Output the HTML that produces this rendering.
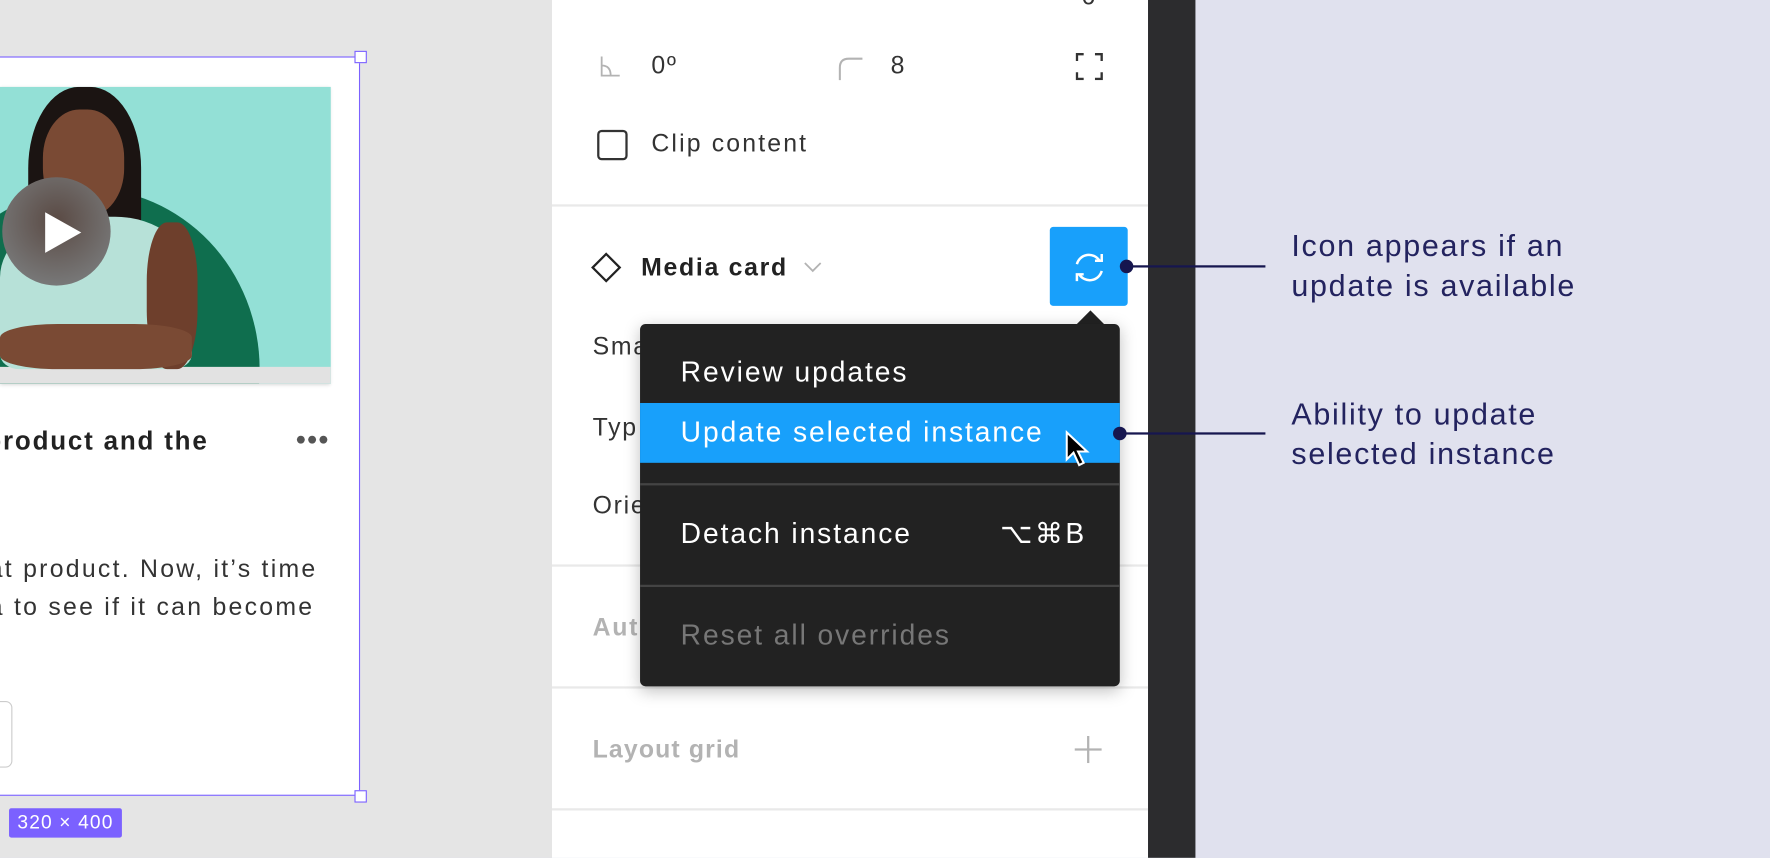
<!DOCTYPE html>
<html><head><meta charset="utf-8"><style>
html,body{margin:0;padding:0;width:1770px;height:858px;overflow:hidden;background:#e0e1ee}
#w{position:absolute;left:0;top:0;width:1568px;height:760px;transform:scale(1.12883);transform-origin:0 0;font-family:"Liberation Sans",sans-serif;overflow:hidden;letter-spacing:1.5px}
.a{position:absolute;white-space:nowrap}
.t{font-size:22px;color:#333;line-height:1}
.hr{position:absolute;left:489px;width:528px;height:2px;background:#e9e9e9}
.mi{position:absolute;left:603px;font-size:25px;color:#fff;line-height:1;letter-spacing:1.7px}
.ann{position:absolute;left:1144px;font-size:27px;color:#23235f;line-height:35px;letter-spacing:1.5px}
</style></head><body><div id="w">
<div class="a" style="left:0;top:0;width:489px;height:760px;background:#e5e5e5"></div>
<!-- card -->
<div class="a" style="left:-4px;top:50px;width:323px;height:655px;background:#fff;border:1.5px solid #7b61ff;box-sizing:border-box"></div>
<div class="a" style="left:314px;top:45px;width:9px;height:9px;background:#fff;border:1.5px solid #7b61ff"></div>
<div class="a" style="left:314px;top:700px;width:9px;height:9px;background:#fff;border:1.5px solid #7b61ff"></div>
<div class="a" style="left:0;top:77px;width:293px;height:263px;overflow:hidden;background:#93e0d6;box-shadow:0 1px 3px rgba(0,0,0,.15)">
 <div class="a" style="left:-75px;top:90px;width:305px;height:320px;border-radius:50%;background:#0f6e4e"></div>
 <div class="a" style="left:0;top:248px;width:293px;height:15px;background:#e2e2e2"></div>
 <div class="a" style="left:25px;top:0;width:100px;height:160px;border-radius:45% 45% 20% 20%;background:#1b1412"></div>
 <div class="a" style="left:38px;top:20px;width:72px;height:95px;border-radius:45%;background:#7a4a34"></div>
 <div class="a" style="left:0;top:115px;width:170px;height:135px;border-radius:40% 40% 10% 10%;background:#b7e1d8"></div>
 <div class="a" style="left:130px;top:120px;width:45px;height:130px;border-radius:40%;background:#6e3f2c"></div>
 <div class="a" style="left:0;top:210px;width:170px;height:40px;border-radius:30%;background:#7a4a34"></div>
 <div class="a" style="left:2px;top:80px;width:96px;height:96px;border-radius:50%;background:radial-gradient(circle at 50% 40%,#5a4a44,#777 75%)"></div>
 <div class="a" style="left:40px;top:111px;width:0;height:0;border-left:32px solid #fff;border-top:18px solid transparent;border-bottom:18px solid transparent"></div>
</div>
<div class="a" style="left:-13px;top:377px;font-size:23px;font-weight:bold;color:#222;letter-spacing:1.6px">product and the</div>
<div class="a" style="left:263px;top:386px;width:7px;height:7px;border-radius:50%;background:#555;box-shadow:10px 0 #555,20px 0 #555"></div>
<div class="a" style="left:-10px;top:487px;font-size:22px;color:#333;line-height:34px;letter-spacing:2px">at product. Now, it’s time<br>a to see if it can become</div>
<div class="a" style="left:-20px;top:621px;width:29px;height:57px;border:1.5px solid #ccc;border-radius:6px"></div>
<div class="a" style="left:8px;top:716px;width:100px;height:26px;background:#7b61ff;border-radius:2px;color:#fff;font-size:17px;line-height:26px;text-align:center;letter-spacing:1px">320 × 400</div>
<!-- panel -->
<div class="a" style="left:489px;top:0;width:528px;height:760px;background:#fff"></div>
<div class="a" style="left:1017px;top:0;width:42px;height:760px;background:#2c2c2e"></div>
<div class="a t" style="left:958px;top:-14px;">6</div>
<svg class="a" style="left:530px;top:48px" width="22" height="22"><path d="M3 2V19H19M3 10Q11 10 11 19" stroke="#b3b3b3" stroke-width="1.6" fill="none"/></svg>
<div class="a t" style="left:577px;top:47px">0º</div>
<svg class="a" style="left:742px;top:48px" width="26" height="24"><path d="M2 23V12Q2 4 10 4H22" stroke="#b3b3b3" stroke-width="1.8" fill="none"/></svg>
<div class="a t" style="left:789px;top:47px">8</div>
<svg class="a" style="left:953px;top:47px" width="24" height="24"><path d="M1 7V1H7M17 1H23V7M23 17V23H17M7 23H1V17" stroke="#333" stroke-width="2.2" fill="none"/></svg>
<div class="a" style="left:529px;top:115px;width:23px;height:23px;border:2px solid #333;border-radius:4px"></div>
<div class="a t" style="left:577px;top:116px;letter-spacing:1.9px">Clip content</div>
<div class="hr" style="top:181px"></div>
<svg class="a" style="left:523px;top:223px" width="28" height="28"><path d="M14 2L26 14L14 26L2 14Z" stroke="#222" stroke-width="2" fill="none"/></svg>
<div class="a t" style="left:568px;top:226px;font-weight:bold;color:#222">Media card</div>
<svg class="a" style="left:711px;top:231px" width="18" height="12"><path d="M2 2L9 9L16 2" stroke="#b3b3b3" stroke-width="1.6" fill="none"/></svg>
<div class="a" style="left:930px;top:201px;width:69px;height:70px;background:#18a0fb;border-radius:3px"></div>
<svg class="a" style="left:946px;top:218px" width="38" height="38"><path d="M8 16A11 11 0 0 1 28 13M30 22A11 11 0 0 1 10 25" stroke="#fff" stroke-width="2.2" fill="none"/><path d="M24 13H30V7M14 25H8V31" stroke="#fff" stroke-width="2.2" fill="none"/></svg>
<div class="a t" style="left:525px;top:296px">Sma</div>
<div class="a t" style="left:525px;top:368px">Typ</div>
<div class="a t" style="left:525px;top:437px">Orie</div>
<div class="hr" style="top:500px"></div>
<div class="a t" style="left:525px;top:545px;font-weight:bold;color:#b3b3b3">Aut</div>
<div class="hr" style="top:608px"></div>
<div class="a t" style="left:525px;top:653px;font-weight:bold;color:#b3b3b3;letter-spacing:1px">Layout grid</div>
<svg class="a" style="left:952px;top:652px" width="24" height="24"><path d="M12 0V24M0 12H24" stroke="#b3b3b3" stroke-width="2"/></svg>
<div class="hr" style="top:716px"></div>
<!-- menu -->
<div class="a" style="left:953px;top:275px;width:0;height:0;border-left:13px solid transparent;border-right:13px solid transparent;border-bottom:13px solid #222"></div>
<div class="a" style="left:567px;top:287px;width:425px;height:321px;background:#222;border-radius:5px;box-shadow:0 4px 14px rgba(0,0,0,.25)"></div>
<div class="mi" style="top:318px">Review updates</div>
<div class="a" style="left:567px;top:357px;width:425px;height:53px;background:#18a0fb"></div>
<div class="mi" style="top:371px">Update selected instance</div>
<div class="a" style="left:567px;top:428px;width:425px;height:2px;background:#444"></div>
<div class="mi" style="top:461px">Detach instance</div>
<div class="mi" style="left:886px;top:461px;letter-spacing:2px">⌥⌘B</div>
<div class="a" style="left:567px;top:518px;width:425px;height:2px;background:#444"></div>
<div class="mi" style="top:551px;color:#777">Reset all overrides</div>
<svg class="a" style="left:943px;top:381px" width="24" height="34"><path d="M2 2V26L8 20L13 31L17 29L12 19H20Z" fill="#000" stroke="#fff" stroke-width="1.8"/></svg>
<!-- annotations -->
<div class="a" style="left:992px;top:230px;width:12px;height:12px;border-radius:50%;background:#16164f"></div>
<div class="a" style="left:1000px;top:235px;width:121px;height:2px;background:#16164f"></div>
<div class="a" style="left:986px;top:378px;width:12px;height:12px;border-radius:50%;background:#16164f"></div>
<div class="a" style="left:994px;top:383px;width:127px;height:2px;background:#16164f"></div>
<div class="ann" style="top:201px">Icon appears if an<br>update is available</div>
<div class="ann" style="top:350px">Ability to update<br>selected instance</div>
</div></body></html>
